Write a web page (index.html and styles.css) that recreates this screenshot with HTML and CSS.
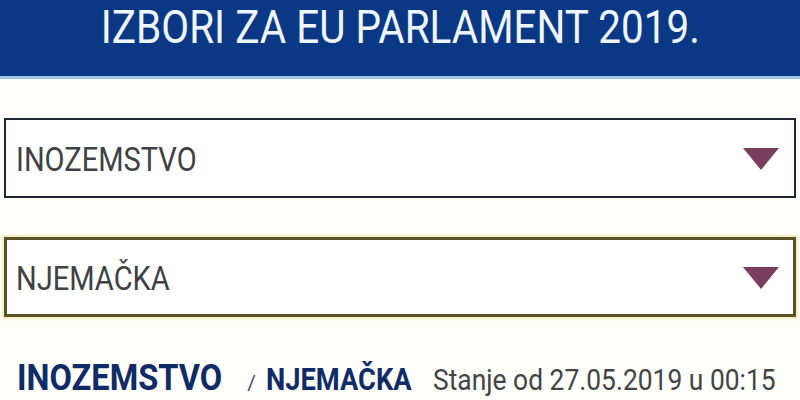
FILE: index.html
```html
<!DOCTYPE html>
<html lang="hr">
<head>
<meta charset="utf-8">
<title>Izbori za EU parlament 2019.</title>
<link rel="stylesheet" href="styles.css">
</head>
<body>
<header class="topbar">
  <h1 class="title">IZBORI ZA EU PARLAMENT 2019.</h1>
</header>
<main class="content">
  <div class="select">
    <span class="select-value">INOZEMSTVO</span>
    <span class="select-arrow"></span>
  </div>
  <div class="select select-focused">
    <span class="select-value">NJEMAČKA</span>
    <span class="select-arrow"></span>
  </div>
  <div class="crumbs">
    <span class="crumb-main">INOZEMSTVO</span>
    <span class="crumb-sep">/</span>
    <span class="crumb-sub">NJEMAČKA</span>
    <span class="crumb-date">Stanje od 27.05.2019 u 00:15</span>
  </div>
</main>
</body>
</html>
```

FILE: styles.css
```css
html, body {
  margin: 0;
  padding: 0;
  background: #fffffb;
  overflow: hidden;
}

body {
  font-family: Roboto, "Liberation Sans", sans-serif;
}

/* condensed text: glyphs are narrowed horizontally */
.title,
.select-value,
.crumb-main,
.crumb-sub,
.crumb-date {
  display: inline-block;
  white-space: nowrap;
  transform: scaleX(0.88);
  transform-origin: 0 50%;
}

.topbar {
  height: 76px;
  background: #0a3884;
  border-bottom: 3px solid #a3c6e8;
  display: flex;
  justify-content: center;
  align-items: flex-start;
}

.title {
  margin: 0;
  font-size: 46px;
  font-weight: 400;
  line-height: 54px;
  color: #eef6ff;
  transform-origin: 50% 50%;
}

.content {
  padding: 0 4px 6px;
}

.select {
  box-sizing: border-box;
  height: 80px;
  margin-top: 39px;
  border: 2px solid #1d2a33;
  background: #ffffff;
  display: flex;
  align-items: center;
  justify-content: space-between;
  padding: 0 15px 0 10px;
}

.select-focused {
  border: 3px solid #5b5226;
  box-shadow: 0 0 2px 2px #f1ebbf;
  padding-left: 9px;
  padding-right: 14px;
}

.select-value {
  font-size: 33px;
  line-height: 1;
  color: #3f4144;
  padding-top: 2px;
}

.select-arrow {
  width: 0;
  height: 0;
  border-left: 18px solid transparent;
  border-right: 18px solid transparent;
  border-top: 22px solid #7a3d5d;
  margin-top: 2px;
}

.crumbs {
  display: flex;
  align-items: baseline;
  margin-top: 42px;
  padding-left: 13px;
  line-height: 1;
  white-space: nowrap;
}

.crumb-main {
  font-size: 37px;
  font-weight: 700;
  color: #0f2c66;
  margin-right: -29px;
}

.crumb-sep {
  font-size: 21px;
  color: #47546a;
  margin: 0 10px 0 26px;
}

.crumb-sub {
  font-size: 31px;
  font-weight: 700;
  color: #0f2c66;
  margin-right: -20px;
}

.crumb-date {
  font-size: 30px;
  color: #434446;
  margin-left: 22px;
  margin-right: -47px;
}
```
